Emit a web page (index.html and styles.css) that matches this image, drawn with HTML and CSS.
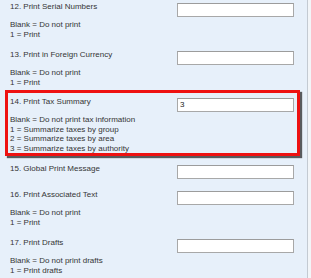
FILE: index.html
```html
<!DOCTYPE html>
<html>
<head>
<meta charset="utf-8">
<link rel="stylesheet" href="styles.css">
</head>
<body>
<div class="frame">
  <div class="panel">
    <div class="row">
      <div class="head"><span class="title">12. Print Serial Numbers</span><span class="field"></span></div>
      <div class="desc"><div>Blank = Do not print</div><div>1 = Print</div></div>
    </div>
    <div class="row">
      <div class="head"><span class="title">13. Print in Foreign Currency</span><span class="field"></span></div>
      <div class="desc"><div>Blank = Do not print</div><div>1 = Print</div></div>
    </div>
    <div class="highlight">
      <div class="row row-inner">
        <div class="head"><span class="title">14. Print Tax Summary</span><span class="field">3</span></div>
        <div class="desc">
          <div>Blank = Do not print tax information</div>
          <div>1 = Summarize taxes by group</div>
          <div>2 = Summarize taxes by area</div>
          <div>3 = Summarize taxes by authority</div>
        </div>
      </div>
    </div>
    <div class="row">
      <div class="head"><span class="title">15. Global Print Message</span><span class="field"></span></div>
    </div>
    <div class="row">
      <div class="head"><span class="title">16. Print Associated Text</span><span class="field"></span></div>
      <div class="desc"><div>Blank = Do not print</div><div>1 = Print</div></div>
    </div>
    <div class="row">
      <div class="head"><span class="title">17. Print Drafts</span><span class="field"></span></div>
      <div class="desc"><div>Blank = Do not print drafts</div><div>1 = Print drafts</div></div>
    </div>
  </div>
</div>
</body>
</html>
```
FILE: styles.css
```css
html, body {
  margin: 0;
  padding: 0;
  height: 100%;
  overflow: hidden;
  background: #f2f5f8;
}
.frame {
  width: 307px;
  height: 278px;
  background: #e7f0fa;
  border-right: 1px solid #c3cad2;
  overflow: hidden;
}
.panel {
  display: flex;
  flex-direction: column;
  gap: 12px;
  padding-top: 3px;
  font-family: "Liberation Sans", Arial, sans-serif;
  font-size: 8px;
  color: #353535;
}
.row {
  display: flex;
  flex-direction: column;
  padding: 0 13px 0 10px;
}
.row-inner {
  padding: 0 3px 0 2px;
}
.head {
  display: flex;
  align-items: flex-start;
  height: 14px;
}
.title {
  flex: 1;
  line-height: 10px;
  margin-top: -1px;
}
.field {
  box-sizing: border-box;
  width: 117px;
  height: 14px;
  background: #fff;
  border: 1px solid #a8a8a8;
  border-top-color: #9c9c9c;
  padding: 0 2px;
  line-height: 12px;
  color: #222;
}
.desc {
  margin-top: 3px;
  line-height: 9.5px;
}
.highlight {
  margin: -9px 7px -3px 5px;
  border: 3px solid #ee1111;
  padding-top: 5px;
  box-shadow: 2px 2px 1px rgba(40, 40, 40, 0.75);
}
```
